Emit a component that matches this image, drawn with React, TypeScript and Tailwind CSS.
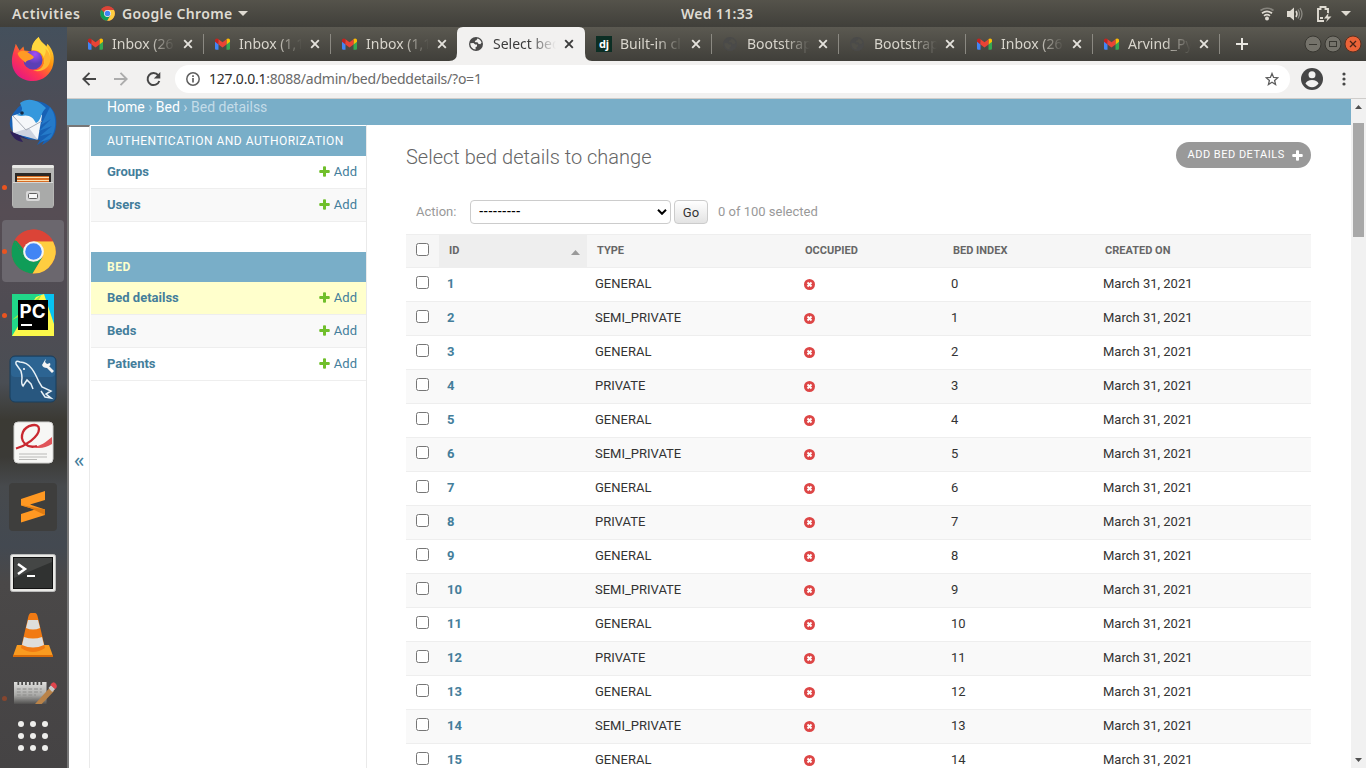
import React from "react";

const UI = "font-['Noto_Sans',sans-serif]";

function ChromeIcon({ size }: { size: number }) {
  return (
    <svg width={size} height={size} viewBox="0 0 48 48" className="shrink-0">
      <circle cx="24" cy="24" r="23.5" fill="#db4437" />
      <path d="M3.6 12.3A23.5 23.5 0 0 0 23 47.5L34 29.5 24 35 13.5 29z" fill="#0f9d58" />
      <path d="M24 13h20.8A23.5 23.5 0 0 1 23 47.5L33.800 29.600z" fill="#ffcd40" />
      <path d="M3.600 12.300L14 30 24 34l-8-10 4-10z" fill="#0f9d58" />
      <path d="M4.500 11A23.500 23.500 0 0 1 44.800 13H24L14 22z" fill="#db4437" />
      <circle cx="24" cy="24" r="11" fill="#f4f4f4" />
      <circle cx="24" cy="24" r="8.800" fill="#4285f4" />
    </svg>
  );
}

function Gmail() {
  return (
    <svg width="15" height="12" viewBox="0 0 15 12" className="shrink-0">
      <path d="M0 2.500v8A1.200 1.200 0 0 0 1.200 11.700h2.300V4z" fill="#4285f4" />
      <path d="M15 2.500v8a1.200 1.200 0 0 1-1.200 1.200h-2.300V4z" fill="#34a853" />
      <path d="M11.500 1.500v5L15 3.800V2.300C15 .4 13-.2 11.500 1z" fill="#fbbc04" />
      <path d="M3.500 1.500v5L0 3.800V2.300C0 .4 2-.2 3.500 1z" fill="#c5221f" />
      <path d="M3.500 6.500V1.200l4 3 4-3v5.300l-4 3z" fill="#ea4335" />
    </svg>
  );
}

function Globe({ color, land }: { color: string; land: string }) {
  return (
    <svg width="14" height="14" viewBox="0 0 14 14" className="shrink-0">
      <circle cx="7" cy="7" r="7" fill={color} />
      <path d="M1.300 6.200l3.200-.2 1.700 1.600H8v1.800l-1.400.7v2.300C3.500 12.300 1.300 9.500 1.300 6.200zM8.400 1.400c2.100.5 3.600 2 4.200 4.200l-1.300 1.600-2-.4-.8-1.600H6.300L5.800 4l1.600-.8z" fill={land} />
    </svg>
  );
}

function Cross({ color }: { color: string }) {
  return (
    <svg width="10" height="10" viewBox="0 0 10 10" className="shrink-0">
      <path d="M1.200 1.200l7.600 7.600M8.800 1.200l-7.600 7.600" stroke={color} strokeWidth="1.900" />
    </svg>
  );
}

type Tab = { icon: string; label: string; active?: boolean; sep?: boolean };
const tabs: Tab[] = [
  { icon: "gmail", label: "Inbox (26", sep: true },
  { icon: "gmail", label: "Inbox (1,1", sep: true },
  { icon: "gmail", label: "Inbox (1,1" },
  { icon: "globe", label: "Select bed", active: true },
  { icon: "dj", label: "Built-in cl", sep: true },
  { icon: "dim", label: "Bootstrap", sep: true },
  { icon: "dim", label: "Bootstrap", sep: true },
  { icon: "gmail", label: "Inbox (26", sep: true },
  { icon: "gmail", label: "Arvind_Py", sep: true },
];

function TabItem({ tab }: { tab: Tab }) {
  return (
    <div className={`relative flex h-[34px] w-[127px] shrink-0 items-center pl-[12px] ${tab.active ? "text-[#3c3c3c]" : "text-[#d8d5cc]"}`}>
      {tab.active && (
        <svg className="absolute -left-[8px] top-0" width="143" height="34" viewBox="0 0 143 34">
          <path d="M0 34Q8 34 8 26V6Q8 0 14 0H130Q136 0 136 6V26Q136 34 143 34z" fill="#f2f1f0" />
        </svg>
      )}
      <div className="relative flex w-[24px] shrink-0 items-center">
        {tab.icon === "gmail" && <Gmail />}
        {tab.icon === "globe" && <Globe color="#4a4a4a" land="#f2f1f0" />}
        {tab.icon === "dim" && <Globe color="#4a4a49" land="#504f49" />}
        {tab.icon === "dj" && (
          <span className="flex h-4 w-4 items-center justify-center bg-[#0c2e24] pb-[1px] font-['Noto_Sans',sans-serif] text-[11px] font-bold leading-none text-white">dj</span>
        )}
      </div>
      <div className={`${UI} relative h-5 w-[63px] shrink-0 overflow-hidden whitespace-nowrap text-[14px] leading-5 [mask-image:linear-gradient(to_right,black_58%,transparent_100%)]`}>
        {tab.label}
      </div>
      <div className="relative ml-[8px] flex">
        <Cross color={tab.active ? "#3c3c3c" : "#e4e2dc"} />
      </div>
      {tab.sep && <div className="absolute -right-[1px] top-[7px] h-[20px] w-px bg-[#8b8982]" />}
    </div>
  );
}

function TopBar() {
  return (
    <header className={`${UI} flex h-[27px] shrink-0 items-center bg-linear-to-b from-[#55534b] to-[#403f3a] pl-3 pr-[15px] text-[14px] font-semibold text-[#dfdbd2]`}>
      <span className="w-[88px] whitespace-nowrap tracking-[0.6px]">Activities</span>
      <ChromeIcon size={15} />
      <span className="ml-[7px] w-[110px] whitespace-nowrap tracking-[0.35px]">Google Chrome</span>
      <svg width="10" height="5" className="ml-[6px]"><path d="M0 0h10L5 5z" fill="#dfdbd2" /></svg>
      <span className="ml-[433px] whitespace-nowrap tracking-[0.3px]">Wed 11:33</span>
      <svg width="14" height="14" viewBox="0 0 14 14" fill="none" className="ml-auto">
        <path d="M.5 3.500Q7-1 13.500 3.500" stroke="#85837c" strokeWidth="1.700" />
        <path d="M2 6.200Q7 2.400 12 6.200M4 8.800Q7 6.400 10 8.800" stroke="#dfdbd2" strokeWidth="1.700" />
        <circle cx="7" cy="11.600" r="2" fill="#dfdbd2" />
      </svg>
      <svg width="16" height="14" viewBox="0 0 16 14" fill="none" className="ml-[13px]">
        <path d="M0 4h3l4-3.500v13L3 10H0z" fill="#dfdbd2" />
        <path d="M9 4q2 3 0 6" stroke="#dfdbd2" strokeWidth="1.500" />
        <path d="M11 2.500q3 4.500 0 9M13 1q4 6 0 12" stroke="#8c8a83" strokeWidth="1.300" />
      </svg>
      <svg width="15" height="16" viewBox="0 0 15 16" fill="none" className="ml-[14px]">
        <path d="M7 15H1V3h2.500V1h5v2H11v4" stroke="#dfdbd2" strokeWidth="1.900" />
        <path d="M3 11h3v2H3z" fill="#dfdbd2" />
        <path d="M11.500 7L7 12.500h3.500L9 16l5.500-5.500H11z" fill="#dfdbd2" />
      </svg>
      <svg width="10" height="5" className="ml-[9px]"><path d="M0 0h10L5 5z" fill="#dfdbd2" /></svg>
    </header>
  );
}

function Slot({ children, running, selected }: { children: React.ReactNode; running?: boolean; selected?: boolean }) {
  return (
    <div className="flex h-16 shrink-0 items-center">
      <div className={`flex h-[62px] w-[62px] items-center rounded-[4px] ${selected ? "bg-[#6b676e]" : ""}`}>
        <span className={`h-[5px] w-[5px] shrink-0 rounded-full ${running ? "bg-[#e95420]" : ""}`} />
        <div className="flex w-[52px] justify-center">{children}</div>
      </div>
    </div>
  );
}

function Dock() {
  return (
    <aside className="flex w-[67px] shrink-0 flex-col overflow-hidden bg-[linear-gradient(to_bottom,#44505c_0%,#4c4d57_10%,#564d54_25%,#4f4c53_38%,#4a4e54_48%,#3b3a34_53%,#3b3a36_58%,#474a4d_62%,#434951_70%,#4a4848_75%,#454344_100%)] pl-[2px]">
      <Slot>
        <svg width="46" height="46" viewBox="0 0 46 48">
          <defs>
            <linearGradient id="fx" x1="1" y1="0" x2=".2" y2="1"><stop offset="0" stopColor="#fff44f" /><stop offset=".4" stopColor="#ff980e" /><stop offset=".7" stopColor="#ff3750" /><stop offset="1" stopColor="#e31587" /></linearGradient>
            <radialGradient id="fp" cx=".6" cy=".2"><stop offset="0" stopColor="#a44cf8" /><stop offset="1" stopColor="#5b3fb5" /></radialGradient>
          </defs>
          <path d="M29 1c2 5 5 6 8 10l1-3c6 6 8 14 6 22-2 10-11 17-21 17C10 47 1 38 1 26 1 19 4 13 5 8l4 7 4-4 1 4 7 1C22 9 25 4 29 1z" fill="url(#fx)" />
          <circle cx="23" cy="25" r="10" fill="url(#fp)" />
          <path d="M7 18c5-5 9-2 15 2l2 2c-2 4-7 2-9 6-3-4-7-5-8-10z" fill="#ff9a25" />
          <path d="M29 1c-5 4-8 9-7 14 5-1 10 2 12 7 2 5 0 10-3 13 9-3 13-12 8-21C36 8 30 7 29 1z" fill="#ffd83f" />
          <path d="M34 22c3 8-2 14-11 14 9 3 18-3 18-12 0-5-2-8-5-11 1 3 0 6-2 9z" fill="#ffb52e" />
        </svg>
      </Slot>
      <Slot>
        <svg width="50" height="50" viewBox="0 0 50 50">
          <path d="M8 12C16 1 34 0 43 10c5 5 6 12 5 19-1 9-6 14-14 18l2-4-7 4 3-5C16 42 5 38 2 28c-1-6 2-12 6-16z" fill="#1761b5" />
          <path d="M4 18L22 12l12 5-4 24L5 35z" fill="#f5f7fa" />
          <path d="M5 35l25 7-9-12z" fill="#cdd3df" /><path d="M5 18l13 14 16-9" fill="none" stroke="#a8aeb8" />
          <path d="M2 33l7 3 13 6-10-3 3 5C8 43 4 39 2 33z" fill="#30215b" />
          <path d="M12 5C22-2 32 4 38 10c-6 5-4 12-10 15-3-6-7-9-15-7l-5-1c4-1 6-3 6-7z" fill="#3598dd" />
          <path d="M42 9l-9 18 10-6-12 12 13-5-12 10 12-3-12 9 10-3c6-7 8-22 0-32z" fill="#247ac9" />
          <circle cx="14" cy="15" r="1.800" fill="#162b46" />
        </svg>
      </Slot>
      <Slot running>
        <svg width="42" height="44" viewBox="0 0 42 44">
          <rect x="0" y="0" width="42" height="42" rx="2" fill="#b7b7b5" /><rect width="42" height="3" rx="1.500" fill="#e9e9e7" />
          <rect x="3" y="8" width="36" height="10" fill="#2c2826" /><rect x="5" y="11" width="32" height="6" fill="#d86d24" />
          <path d="M5 12h32v1H5zM5 15h32v1H5z" fill="#ffe0ae" />
          <path d="M1 17h40v25q0 1-1 1H2q-1 0-1-1z" fill="#a9aaa9" /><path d="M1 17h40v1H1z" fill="#d6d6d5" />
          <rect x="14" y="26" width="14" height="10" rx="2" fill="#d8d8d8" /><rect x="16.500" y="28.500" width="9" height="5" rx="1" fill="#f7f7f7" stroke="#616161" />
        </svg>
      </Slot>
      <Slot running selected><ChromeIcon size={45} /></Slot>
      <Slot running>
        <svg width="42" height="42" viewBox="0 0 42 42">
          <rect width="42" height="42" fill="#21d789" /><path d="M42 0v42L27 0z" fill="#07c3f2" /><path d="M0 42L24 3l8-3 10 30v12z" fill="#fcf84a" /><path d="M0 26L30 0l-9 16z" fill="#9bea45" />
          <rect x="6" y="6" width="30" height="30" fill="#000" />
          <rect x="9" y="30" width="11" height="2" fill="#fff" />
          <text x="7.500" y="23.500" textLength="26" lengthAdjust="spacingAndGlyphs" fill="#fff" fontFamily="Inter, sans-serif" fontSize="19" fontWeight="bold">PC</text>
        </svg>
      </Slot>
      <Slot>
        <svg width="48" height="48" viewBox="0 0 48 48">
          <rect x="1" y="1" width="46" height="46" rx="5" fill="#28577f" stroke="#193e5d" /><rect x="2" y="2" width="44" height="20" rx="4" fill="#2c6492" />
          <path d="M7 9q-1-4 4-2c10 0 15 11 19 20l3 5 9 4-5 3 5 4-6-1-4-6M7 9l5 7q1 4 1 7-1 6 1 8l4-6 4 4 2 5" fill="none" stroke="#e8f1f6" strokeWidth="1.500" />
          <circle cx="15" cy="14" r="1" fill="#fff" /><path d="M37 4l-1 3 2 2 3-1q1 3-1 3l5 5-2 2-5-5q-4 0-5-3l3-5z" fill="#f4f4f4" />
        </svg>
      </Slot>
      <Slot>
        <svg width="41" height="43" viewBox="0 0 41 43" className="mb-[2px]">
          <rect x="1" y="1" width="39" height="41" rx="4" fill="#f7f7f5" stroke="#d0d0ce" />
          <path d="M17 25C25 27 32 22 39 16v7c-8 5-15 5-22 2z" fill="#e0555a" />
          <path d="M3 27.500C12 25 26 16 26 8c0-7-13-4-16 3-4 9 4 17 14 14" fill="none" stroke="#c92830" strokeWidth="2.300" />
          <path d="M6 33h28M6 36h28M6 38.500h18" stroke="#b9b9b7" />
        </svg>
      </Slot>
      <Slot>
        <svg width="48" height="48" viewBox="0 0 48 48">
          <rect width="48" height="48" rx="4" fill="#3e3e3d" />
          <path d="M12 16l24-8v9l-15 4.500 15 5V32l-24 7.500V31l14-4.500-14-4z" fill="#ff9822" /><path d="M12 22l24 4.500V32l-15-7z" fill="#df7b12" />
        </svg>
      </Slot>
      <Slot>
        <svg width="46" height="38" viewBox="0 0 46 38" className="mt-[3px]">
          <rect x=".5" y=".5" width="45" height="37" rx="2" fill="#e9e9e6" stroke="#bbb" /><rect x="3.500" y="3.500" width="39" height="31" fill="#303231" stroke="#121212" />
          <path d="M4 4h38v4L4 24z" fill="#444645" /><path d="M8 10l7 5-7 5" fill="none" stroke="#fff" strokeWidth="2.500" /><path d="M17 22h8" stroke="#fff" strokeWidth="2" />
        </svg>
      </Slot>
      <Slot>
        <svg width="40" height="46" viewBox="0 0 40 46">
          <path d="M4 33h32l4 11H0z" fill="#f99b20" /><path d="M0 43h40v2H0z" fill="#d86b09" />
          <path d="M18 1h4q2 0 3 5l7 30q-12 8-24 0l7-30q1-5 3-5z" fill="#f17a13" />
          <path d="M15 8h10l2 8q-7 3-14 0zM11 25q9 3 18 0l2 8q-11 5-22 0z" fill="#dededc" />
        </svg>
      </Slot>
      <div className="flex h-[37px] shrink-0 items-end">
        <span className="mb-[3px] h-[5px] w-[5px] rounded-full bg-[#86462f]" />
        <svg width="44" height="25" viewBox="0 0 46 25" preserveAspectRatio="none" className="ml-[7px]">
          <defs><linearGradient id="nt" x1="0" y1="0" x2="0" y2="1"><stop offset="0" stopColor="#e0e0de" /><stop offset=".6" stopColor="#a9a9a7" /><stop offset="1" stopColor="#504f4e" /></linearGradient></defs>
          <path d="M0 3h34v22H0z" fill="url(#nt)" /><path d="M4.500 1v5m4-5v5m4-5v5m4-5v5m4-5v5m4-5v5m4-5v5" stroke="#4a4a49" strokeWidth="1.800" />
          <path d="M3 10h26M3 13h26M3 16h20M3 19h18" stroke="#8b8b89" strokeDasharray="4 2" />
          <path d="M22 25L38 8l4 4-13 13z" fill="#b98349" /><path d="M36 9l3-3 4 4-3 3z" fill="#c8c8c8" /><path d="M38 6q3-5 6-1 2 3-1 5z" fill="#df444b" />
        </svg>
      </div>
      <div className="mt-[17px] grid shrink-0 grid-cols-[6px_6px_6px] gap-[6px] pl-[16px]">
        {Array.from({ length: 9 }, (_, i) => <span key={i} className="h-[6px] w-[6px] rounded-full bg-[#eeeeec]" />)}
      </div>
    </aside>
  );
}

function TabStrip() {
  return (
    <div className="flex h-[34px] shrink-0 items-center bg-linear-to-b from-[#5b5951] to-[#403f3a] pl-[9px]">
      {tabs.map((t, i) => <TabItem key={i} tab={t} />)}
      <svg width="12" height="12" className="ml-[17px] shrink-0"><path d="M6 0v12M0 6h12" stroke="#e9e7e1" strokeWidth="2" /></svg>
      <svg width="60" height="20" viewBox="0 0 60 20" className="mr-[3px] ml-auto shrink-0" fill="none">
        <circle cx="10" cy="10" r="8" fill="#75736b" stroke="#383731" /><path d="M6 10.500h8" stroke="#393832" />
        <circle cx="30" cy="10" r="8" fill="#75736b" stroke="#383731" /><rect x="26.500" y="7.500" width="7" height="5" stroke="#393832" />
        <circle cx="50" cy="10" r="8" fill="#ec6338" stroke="#5a2f1f" /><path d="M47 7l6 6M53 7l-6 6" stroke="#4a2417" strokeWidth="1.300" />
      </svg>
    </div>
  );
}

function Toolbar() {
  return (
    <div className="flex h-[38px] shrink-0 items-start border-b border-[#cfcdcb] bg-[#f2f1f0] pt-[4px]">
      <div className="flex h-7 w-[108px] items-center pl-[15px]">
        <svg width="14" height="14" fill="none" stroke="#464646" strokeWidth="1.900"><path d="M14 7H1.500M7.500.8L1.300 7l6.200 6.200" /></svg>
        <svg width="14" height="14" fill="none" stroke="#acacac" strokeWidth="1.900" className="ml-[18px]"><path d="M0 7h12.500M6.500.8L12.700 7l-6.200 6.200" /></svg>
        <svg width="15" height="15" fill="none" className="ml-[18px]"><path d="M12.300 3.300A6 6 0 1 0 13.300 9" stroke="#464646" strokeWidth="2" /><path d="M14.300 0v6.500H7.800z" fill="#464646" /></svg>
      </div>
      <div className="flex h-7 w-[1115px] items-center rounded-full bg-white pr-[11px] pl-[11px]">
        <svg width="14" height="14" fill="none"><circle cx="7" cy="7" r="6.200" stroke="#5f5f5f" strokeWidth="1.500" /><path d="M7 6v4.500M7 3.200v1.700" stroke="#5f5f5f" strokeWidth="1.700" /></svg>
        <span className={`${UI} ml-[9px] whitespace-nowrap pb-[2px] text-[14px] tracking-[-0.23px] text-[#6a6a6a]`}><span className="text-[#2e2e2e]">127.0.0.1</span>:8088/admin/bed/beddetails/?o=1</span>
        <svg width="14" height="14" viewBox="0 0 14 14" fill="none" className="ml-auto"><path d="M7 1.500l1.600 3.900 4.200.3-3.200 2.700 1 4.100L7 10.300l-3.600 2.200 1-4.100L1.200 5.700l4.200-.3z" stroke="#5e5e5e" strokeWidth="1.300" /></svg>
      </div>
      <svg width="22" height="22" viewBox="0 0 22 22" className="mt-[3px] ml-[11px]"><circle cx="11" cy="11" r="11" fill="#464646" /><circle cx="11" cy="6.800" r="3.500" fill="#f2f1f0" /><path d="M4.500 15.500Q6 12 11 12t6.500 3.500Q15 19.200 11 19.200t-6.500-3.700z" fill="#f2f1f0" /></svg>
      <svg width="4" height="14" viewBox="0 0 4 14" className="mt-[7px] ml-[19px]" fill="#464646"><circle cx="2" cy="2" r="1.600" /><circle cx="2" cy="7" r="1.600" /><circle cx="2" cy="12" r="1.600" /></svg>
    </div>
  );
}

function Plus({ color }: { color: string }) {
  return <svg width="11" height="11" viewBox="0 0 11 11" className="shrink-0"><path d="M5.500 1.200v8.600M1.200 5.500h8.600" stroke={color} strokeWidth="1.600" strokeLinecap="round" /><path d="M5.500 .5v10M.5 5.500h10" stroke={color} strokeWidth="3" /></svg>;
}

function NavRow({ label, tone }: { label: string; tone: string }) {
  return (
    <div className={`flex h-[33px] items-center border-b border-[#eeeeee] pr-[9px] pb-[1px] pl-4 text-[13px] text-[#447e9b] ${tone}`}>
      <span className="font-bold">{label}</span>
      <span className="ml-auto flex items-center gap-[4px]"><Plus color="#70bf2b" />Add</span>
    </div>
  );
}

const kinds = ["GENERAL", "SEMI_PRIVATE", "GENERAL", "PRIVATE"];
const GRID = "grid grid-cols-[33px_148px_208px_148px_152px_216px]";

function Box() {
  return <span className="block h-[13px] w-[13px] rounded-[2.5px] border border-[#767676] bg-white" />;
}

function Changelist() {
  return (
    <main className="w-[985px] overflow-hidden pl-[39px] pr-10">
      <div className="flex h-[75px] items-start justify-between pt-[17px]">
        <h1 className="pt-[1px] text-[20px] font-light leading-[28px] text-[#666]">Select bed details to change</h1>
        <a className="flex h-[26px] w-[135px] items-center rounded-full bg-[#999] pl-[11.5px] text-[11px] uppercase tracking-[0.5px] text-white"><span className="w-[104.5px] whitespace-nowrap">Add bed details</span><Plus color="#fff" /></a>
      </div>
      <div className="flex h-[24px] items-center pl-[10px] text-[13px] text-[#999]">
        <span className="w-[54px]">Action:</span>
        <div className="flex h-6 w-[201px] items-center justify-between rounded-[4px] border border-[#ccc] bg-white pr-[3px] pl-2 text-black">
          <span className="text-[13px] font-medium tracking-[0.2px]">---------</span>
          <svg width="10" height="6" fill="none"><path d="M1 .8l4 4 4-4" stroke="#000" strokeWidth="2" /></svg>
        </div>
        <span className="ml-[3px] flex h-6 w-[34px] items-center justify-center rounded-[4px] border border-[#ccc] bg-linear-to-b from-white to-[#e3e3e3] pt-[2px] text-[13px] text-[#333]">Go</span>
        <span className="ml-[10px]">0 of 100 selected</span>
      </div>
      <div className={`${GRID} mt-[10px] h-[34px] border-y border-[#eeeeee] bg-[#f6f6f6] text-[11px] font-bold leading-[32px] text-[#666]`}>
        <span className="flex items-start pt-[8px] pl-[10px]"><Box /></span>
        <span className="flex items-center justify-between bg-[#eeeeee] pr-[7px] pl-[10px]">ID<svg width="9" height="5" className="mt-[3px]"><path d="M0 5h9L4.500 0z" fill="#999" /></svg></span>
        <span className="pl-[10px]">TYPE</span><span className="pl-[10px]">OCCUPIED</span><span className="pl-[10px]">BED INDEX</span><span className="pl-[10px]">CREATED ON</span>
      </div>
      {Array.from({ length: 15 }, (_, i) => (
        <div key={i} className={`${GRID} h-[34px] border-b border-[#eeeeee] text-[13px] leading-[32px] text-[#333] ${i % 2 ? "bg-[#f9f9f9]" : "bg-white"}`}>
          <span className="pt-[8px] pl-[10px]"><Box /></span>
          <span className="pl-2 font-bold text-[#447e9b]">{i + 1}</span>
          <span className="pl-2">{kinds[i % 4]}</span>
          <span className="pt-[11px] pl-[9px]">
            <svg width="11" height="11" viewBox="0 0 11 11"><circle cx="5.500" cy="5.500" r="5.500" fill="#dd4646" /><path d="M3.500 3.500l4 4M7.500 3.500l-4 4" stroke="#fff" strokeWidth="1.900" /></svg>
          </span>
          <span className="pl-2">{i}</span>
          <span className="pl-2">March 31, 2021</span>
        </div>
      ))}
    </main>
  );
}

export default function App() {
  return (
    <div className="flex h-[768px] w-[1366px] flex-col overflow-hidden bg-white font-[Roboto,sans-serif]">
      <TopBar />
      <div className="flex min-h-0 flex-1">
        <Dock />
        <div className="flex w-[1299px] flex-col">
          <TabStrip />
          <Toolbar />
          <div className="flex min-h-0 flex-1">
            <div className="flex w-[1284px] flex-col">
              <div className="h-[26px] shrink-0 bg-[#79aec8] pl-10 text-[14px] leading-[17px] text-[#c4dce8]">
                <span className="text-white">Home</span> › <span className="text-white">Bed</span> › Bed detailss
              </div>
              <div className="flex min-h-0 flex-1">
                <div className="flex w-[23px] shrink-0 items-center justify-center border-t-2 border-r border-l-2 border-t-[#777] border-r-[#eaeaea] border-l-[#777] text-[20px] text-[#447e9b]"><span className="mt-[25px] font-['Noto_Sans',sans-serif]">«</span></div>
                <nav className="w-[277px] shrink-0 border-r border-[#eaeaea] pt-[1px] pl-[1px]">
                  <div className="h-[30px] bg-[#79aec8] pl-4 text-[12px] leading-[30px] tracking-[0.5px] text-white">AUTHENTICATION AND AUTHORIZATION</div>
                  <NavRow label="Groups" tone="bg-white" />
                  <NavRow label="Users" tone="bg-[#f9f9f9]" />
                  <div className="mt-[30px] h-[30px] bg-[#79aec8] pl-4 text-[12px] font-bold leading-[30px] tracking-[0.5px] text-[#ffffcc]">BED</div>
                  <NavRow label="Bed detailss" tone="bg-[#ffffcc]" />
                  <NavRow label="Beds" tone="bg-[#f9f9f9]" />
                  <NavRow label="Patients" tone="bg-white" />
                </nav>
                <Changelist />
              </div>
            </div>
            <div className="flex w-[15px] flex-col items-center bg-[#f1f1f1] py-[6px]">
              <svg width="7" height="4"><path d="M0 4h7L3.500 0z" fill="#505050" /></svg>
              <div className="mt-[14px] h-[114px] w-[11px] bg-[#a8a8a8]" />
              <svg width="7" height="4" className="mt-auto"><path d="M0 0h7L3.500 4z" fill="#505050" /></svg>
            </div>
          </div>
        </div>
      </div>
    </div>
  );
}
